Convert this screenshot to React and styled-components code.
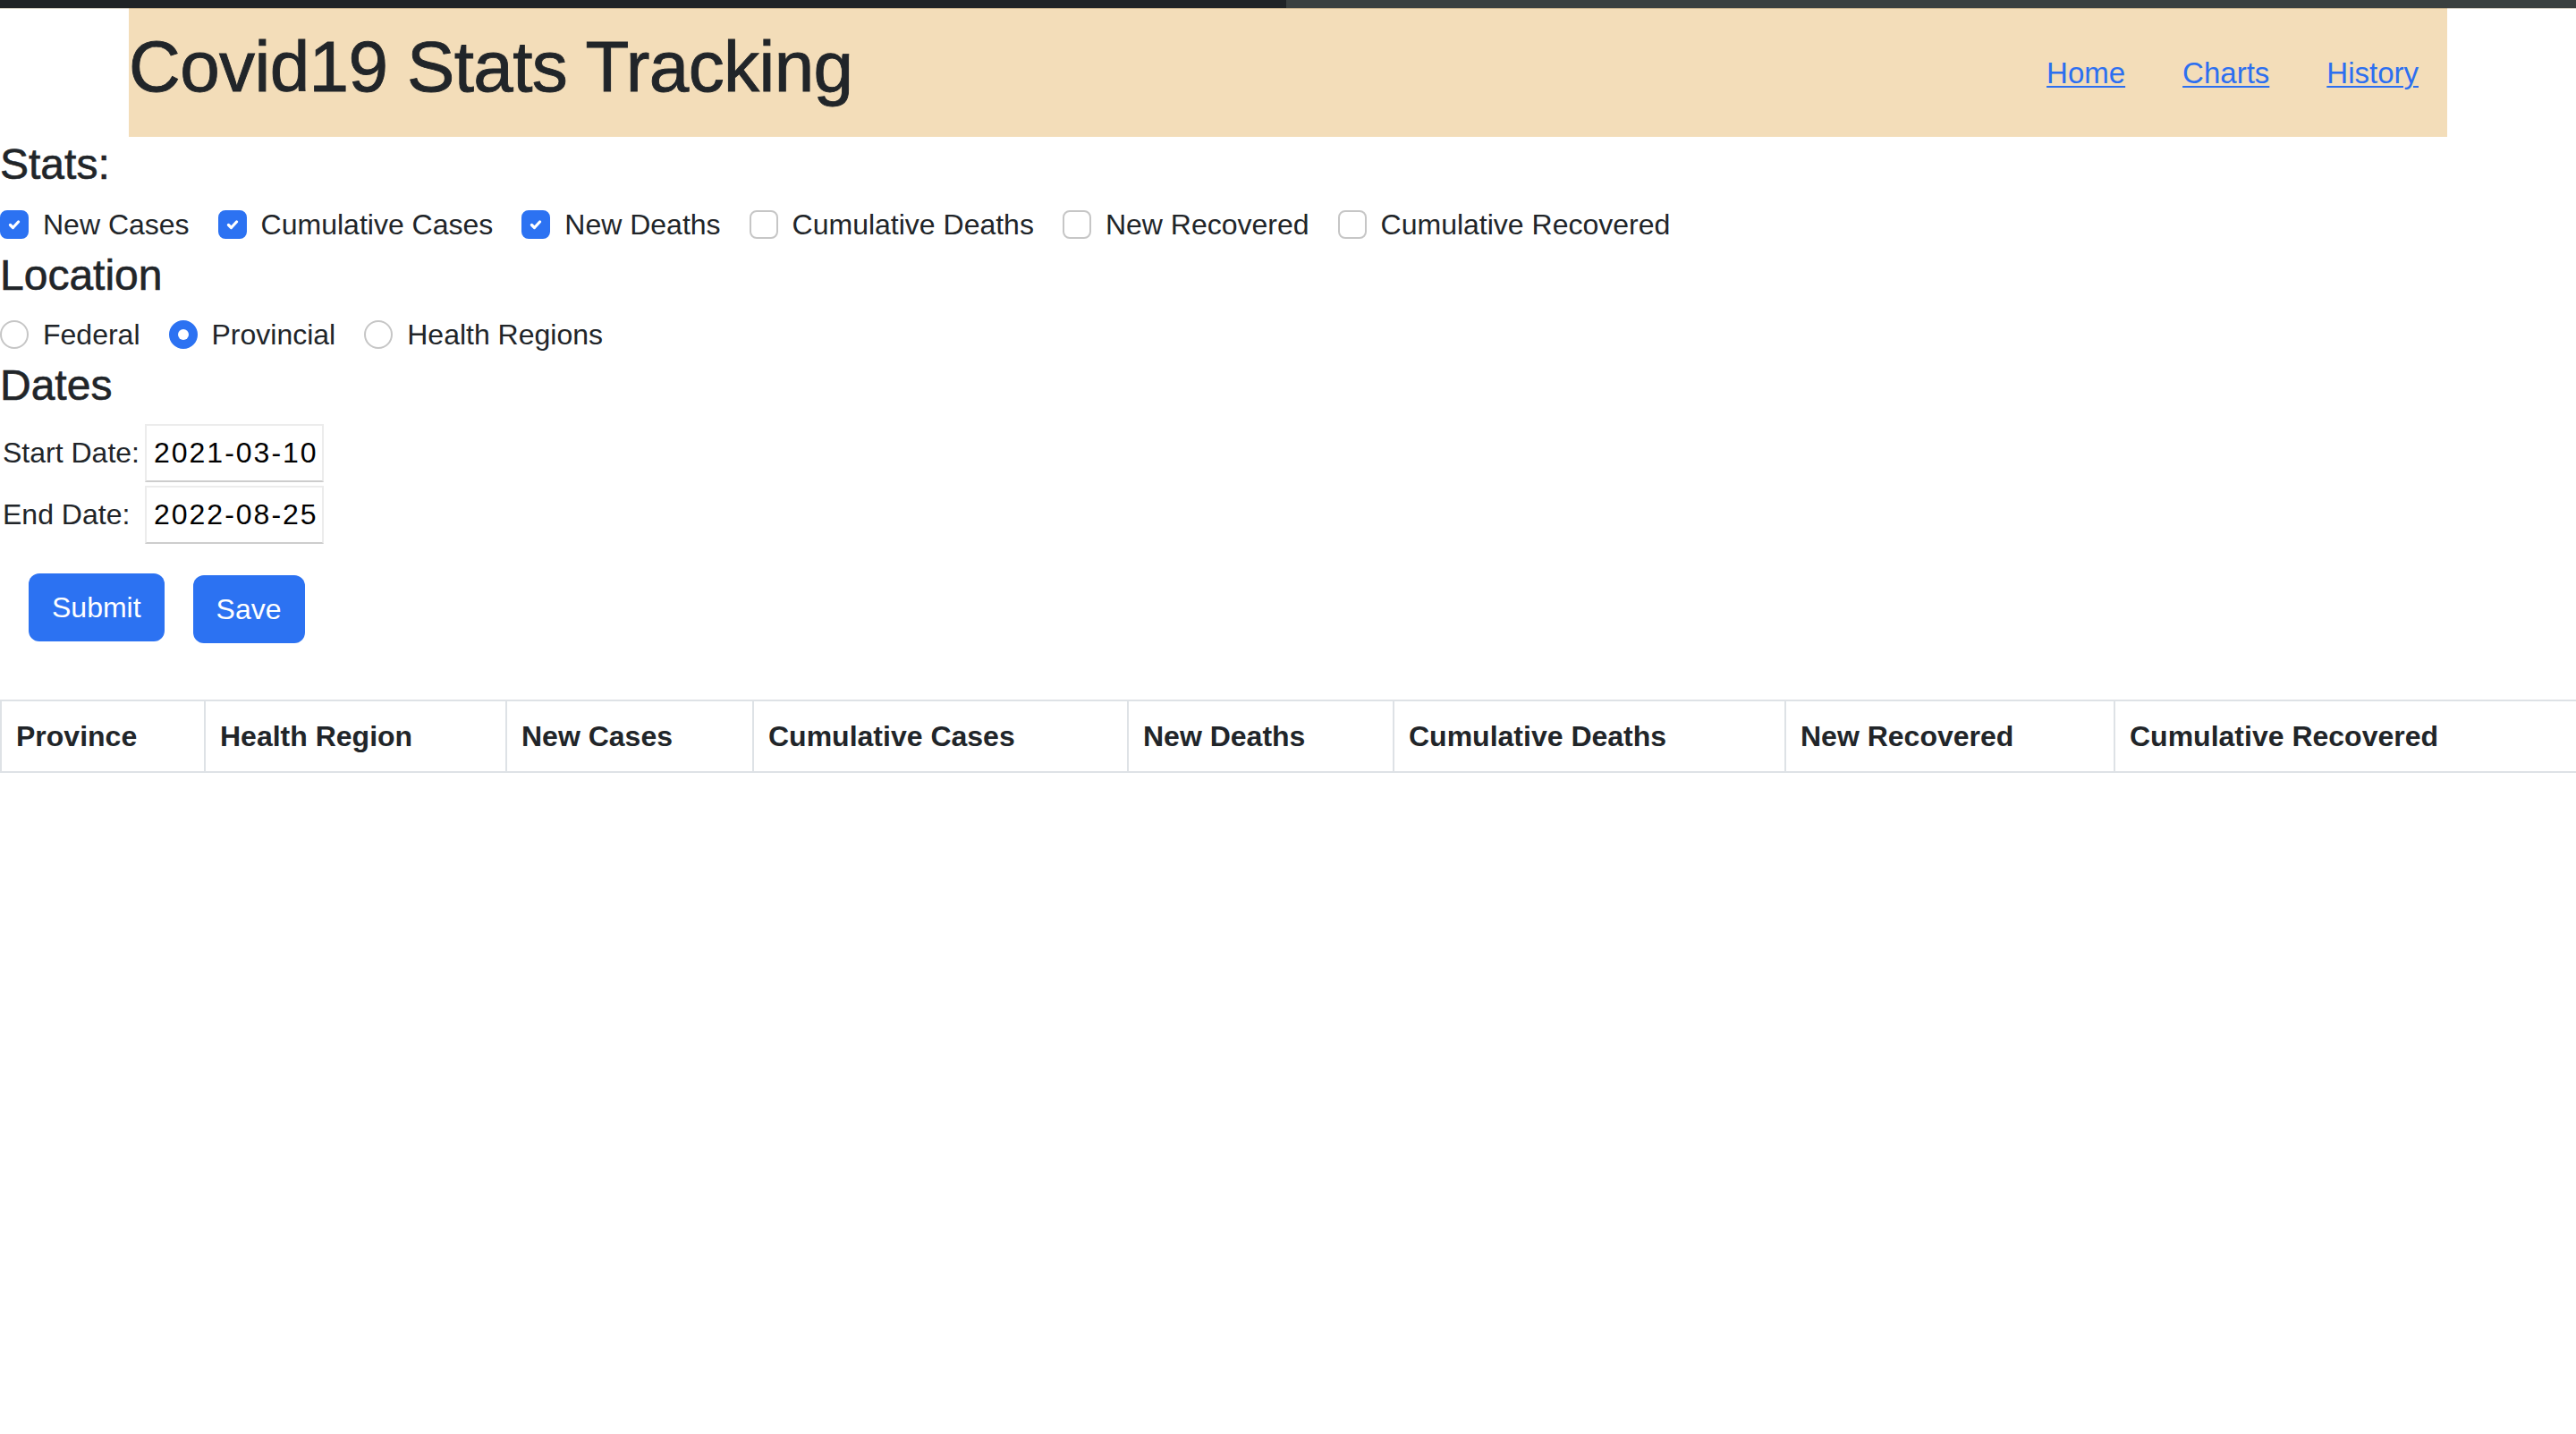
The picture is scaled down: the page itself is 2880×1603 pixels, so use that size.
import React from 'react';
import styled, { createGlobalStyle } from 'styled-components';

const GlobalStyle = createGlobalStyle`
  html, body {
    margin: 0;
    padding: 0;
    background: #fff;
  }
  body {
    font-family: "Liberation Sans", Arial, sans-serif;
    color: #212529;
    font-size: 32px;
    line-height: 1.5;
  }
`;

const TopBar = styled.div`
  position: relative;
  z-index: 1;
  display: grid;
  grid-template-columns: 1438px 1fr;
  height: 9px;
  box-shadow: 0 1px 0 rgba(80, 60, 20, 0.25);
`;

const BarSegment = styled.div`
  background: ${(props) => props.$tone};
`;

const Header = styled.header`
  width: 90%;
  height: 144px;
  margin: 0 auto;
  box-sizing: border-box;
  padding-top: 18px;
  background: #f3ddb9;
  display: flex;
  justify-content: space-between;
  align-items: flex-start;
`;

// medium weight: Liberation Sans has no 500, so thicken the regular strokes a little
const Title = styled.h1`
  margin: 0;
  font-size: 80px;
  font-weight: 500;
  line-height: 1.2;
  letter-spacing: -0.6px;
  -webkit-text-stroke: 0.9px currentColor;
`;

const Nav = styled.nav`
  display: flex;
  margin-top: 30px;
`;

const NavLink = styled.a`
  margin: 0 32px;
  color: #2c6ff0;
  font-size: 33px;
  line-height: 50px;
  text-decoration: underline;
  text-decoration-thickness: 2px;
  text-underline-offset: 3px;
  cursor: pointer;
`;

const Main = styled.main`
  padding-top: 2px;
`;

const SectionTitle = styled.h4`
  margin: 0 0 14px;
  font-size: 48px;
  font-weight: 500;
  line-height: 1.2;
  -webkit-text-stroke: 0.6px currentColor;
`;

const OptionRow = styled.div`
  display: flex;
  flex-wrap: wrap;
  margin-bottom: 4px;
`;

const Option = styled.label`
  display: flex;
  align-items: flex-start;
  margin-right: 32px;
  line-height: 48px;
  cursor: pointer;
`;

const Box = styled.span`
  flex: none;
  width: 32px;
  height: 32px;
  margin: 8px 16px 0 0;
  box-sizing: border-box;
  display: flex;
  align-items: center;
  justify-content: center;
  border: 2px solid ${(props) => (props.$on ? '#2c72f2' : '#c6c6c6')};
  border-radius: ${(props) => (props.$round ? '50%' : '8px')};
  background: ${(props) => (props.$on ? '#2c72f2' : '#fff')};
`;

const Dot = styled.span`
  width: 12px;
  height: 12px;
  border-radius: 50%;
  background: #fff;
`;

const DateGrid = styled.div`
  display: grid;
  grid-template-columns: max-content 200px;
  column-gap: 6px;
  row-gap: 4px;
  padding-left: 3px;
  align-items: center;
`;

const DateField = styled.div`
  height: 65px;
  box-sizing: border-box;
  padding-left: 8px;
  display: flex;
  align-items: center;
  border: 2px solid #ececec;
  border-bottom-color: #cdcdcd;
  color: #000;
  letter-spacing: 2px;
`;

const ButtonRow = styled.div`
  display: flex;
  align-items: flex-start;
  gap: 32px;
  padding-left: 32px;
  margin-top: 33px;
`;

const Button = styled.button`
  margin-top: ${(props) => props.$drop || 0}px;
  padding: 14px 26px;
  border: none;
  border-radius: 12px;
  background: #2c72f2;
  color: #fff;
  font-family: inherit;
  font-size: 32px;
  line-height: 48px;
  cursor: pointer;
`;

const Table = styled.table`
  width: 100%;
  margin-top: 63px;
  border-collapse: collapse;
  table-layout: fixed;
`;

const Th = styled.th`
  width: ${(props) => props.$w}px;
  box-sizing: border-box;
  padding: 15px 16px;
  border: 2px solid #dee2e6;
  text-align: left;
  font-weight: 700;
  font-size: 32px;
  line-height: 48px;
`;

const stats = [
  { label: 'New Cases', on: true },
  { label: 'Cumulative Cases', on: true },
  { label: 'New Deaths', on: true },
  { label: 'Cumulative Deaths', on: false },
  { label: 'New Recovered', on: false },
  { label: 'Cumulative Recovered', on: false },
];

const locations = [
  { label: 'Federal', on: false },
  { label: 'Provincial', on: true },
  { label: 'Health Regions', on: false },
];

const columns = [
  { name: 'Province', w: 228 },
  { name: 'Health Region', w: 337 },
  { name: 'New Cases', w: 276 },
  { name: 'Cumulative Cases', w: 419 },
  { name: 'New Deaths', w: 297 },
  { name: 'Cumulative Deaths', w: 438 },
  { name: 'New Recovered', w: 368 },
  { name: 'Cumulative Recovered', w: 517 },
];

const CheckMark = () => (
  <svg width="20" height="20" viewBox="0 0 20 20" fill="none">
    <path
      d="M5.5 10.5l3 3l6-6.5"
      stroke="#fff"
      strokeWidth="3.2"
      strokeLinecap="round"
      strokeLinejoin="round"
    />
  </svg>
);

const App = () => (
  <>
    <GlobalStyle />
    <TopBar>
      <BarSegment $tone="#1f2326" />
      <BarSegment $tone="#3a4040" />
    </TopBar>
    <Header>
      <Title>Covid19 Stats Tracking</Title>
      <Nav>
        <NavLink>Home</NavLink>
        <NavLink>Charts</NavLink>
        <NavLink>History</NavLink>
      </Nav>
    </Header>

    <Main>
      <SectionTitle>Stats:</SectionTitle>
      <OptionRow>
        {stats.map((item) => (
          <Option key={item.label}>
            <Box $on={item.on}>{item.on && <CheckMark />}</Box>
            {item.label}
          </Option>
        ))}
      </OptionRow>

      <SectionTitle>Location</SectionTitle>
      <OptionRow>
        {locations.map((item) => (
          <Option key={item.label}>
            <Box $on={item.on} $round>
              {item.on && <Dot />}
            </Box>
            {item.label}
          </Option>
        ))}
      </OptionRow>

      <SectionTitle>Dates</SectionTitle>
      <DateGrid>
        <span>Start Date:</span>
        <DateField>2021-03-10</DateField>
        <span>End Date:</span>
        <DateField>2022-08-25</DateField>
      </DateGrid>

      <ButtonRow>
        <Button>Submit</Button>
        <Button $drop={2}>Save</Button>
      </ButtonRow>

      <Table>
        <thead>
          <tr>
            {columns.map((col) => (
              <Th key={col.name} $w={col.w}>
                {col.name}
              </Th>
            ))}
          </tr>
        </thead>
      </Table>
    </Main>
  </>
);

export default App;
